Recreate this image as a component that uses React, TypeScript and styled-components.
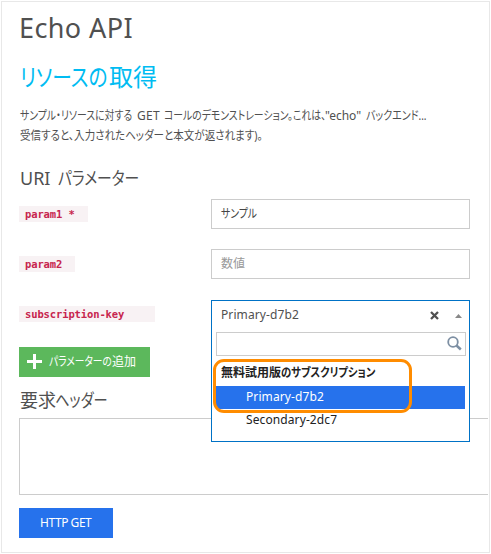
import React from "react";
import styled, { createGlobalStyle, css } from "styled-components";

const Global = createGlobalStyle`
  *, *::before, *::after { box-sizing: border-box; }
  body { margin: 0; background: #fff; overflow: hidden; }
  h1, h2, h3, p, ul { margin: 0; padding: 0; font-weight: 400; }
`;

const Frame = styled.main`
  width: 489px;
  height: 552px;
  margin: 1px;
  padding: 0 1px 0 17px;
  border: 1px solid #e8e8e8;
  background: #fff;
  color: #505050;
  font: 12px/20px "Noto Sans", "Noto Sans CJK JP", sans-serif;
`;

/* Horizontally condensed text run, as in compact Japanese UI type. */
const Run = styled.span<{ $scale?: number; $space?: number; $width?: number }>`
  display: inline-block;
  width: ${(p) => (p.$width ? `${p.$width}px` : "auto")};
  white-space: nowrap;
  transform-origin: 0 50%;
  font-feature-settings: "palt";
  letter-spacing: ${(p) => p.$space ?? 0}px;
  transform: scaleX(${(p) => p.$scale ?? 1});
`;

const Line = styled.span`
  display: flex;
  height: 20px;
`;

const Title = styled.h1`
  height: 60px;
  padding: 6px 0 0 0;
  font-size: 27px;
  line-height: 40px;
`;

const Operation = styled.h2`
  display: flex;
  height: 43px;
  padding-left: 1px;
  color: #00bcf2;
  font-size: 24px;
  line-height: 30px;
`;

const Description = styled.p`
  height: 60px;
  padding: 1px 0 0 1px;
`;

const Section = styled.h3<{ $height: number; $top?: number }>`
  display: flex;
  height: ${(p) => p.$height}px;
  padding: ${(p) => p.$top ?? 0}px 0 0 1px;
  font-size: 18px;
  line-height: 26px;
`;

const ParamRow = styled.div<{ $height: number }>`
  display: grid;
  grid-template-columns: 192px 259px;
  align-items: start;
  height: ${(p) => p.$height}px;
`;

const Key = styled.code<{ $width: number }>`
  width: ${(p) => p.$width}px;
  height: 16px;
  margin-top: 7px;
  padding-left: 6px;
  background: #f8f2f4;
  color: #c7254e;
  font: bold 10.5px/16px "DejaVu Sans Mono", monospace;
  letter-spacing: -0.12px;
  white-space: pre;
`;

const Field = styled.div<{ $muted?: boolean }>`
  height: 30px;
  padding-left: 9px;
  border: 1px solid #ccc;
  line-height: 28px;
  color: ${(p) => (p.$muted ? "#999" : "#444")};
`;

const Select = styled.div`
  position: relative;
  z-index: 1;
  height: 142px;
  margin-top: 1px;
  padding: 0 4px;
  border: 1px solid #0072c6;
  background: #fff;
  letter-spacing: 0.1px;
`;

const Current = styled.div`
  display: flex;
  align-items: center;
  height: 31px;
  padding: 0 3px 4px 5px;

  span { flex: 1; }
`;

const ClearIcon = styled.svg`
  width: 9px;
  height: 9px;
  margin: 2px 16px 0 0;
`;

const ArrowIcon = styled.svg`
  width: 7px;
  height: 4px;
  margin-top: 3px;
`;

const Search = styled.div`
  display: flex;
  justify-content: flex-end;
  width: 250px;
  height: 24px;
  padding: 3px 3px;
  border: 1px solid #ccc;
`;

const SearchIcon = styled.svg`
  width: 15px;
  height: 15px;
`;

const Group = styled.div`
  display: flex;
  height: 30px;
  padding: 7px 0 0 5px;
  color: #222;
  font-weight: 700;
  letter-spacing: 0;
`;

const Option = styled.div<{ $active?: boolean }>`
  width: 249px;
  height: 23px;
  padding-left: 30px;
  line-height: 22px;
  color: #222;
  ${(p) =>
    p.$active &&
    css`
      background: #2672ec;
      color: #fff;
    `}
`;

const Highlight = styled.div`
  position: absolute;
  left: 1px;
  top: 58px;
  width: 199px;
  height: 54px;
  border: 3px solid #ff8c00;
  border-radius: 11px;
`;

const Button = styled.button<{ $green?: boolean }>`
  display: flex;
  align-items: center;
  width: ${(p) => (p.$green ? 131 : 94)}px;
  height: 30px;
  padding: 0 0 1px ${(p) => (p.$green ? 8 : 21)}px;
  border: 0;
  background: ${(p) => (p.$green ? "#5cb85c" : "#2672ec")};
  color: #fff;
  font: inherit;
`;

const PlusIcon = styled.svg`
  flex: none;
  width: 15px;
  height: 15px;
  margin: 0 7px 0 0;
`;

const HeadersBox = styled.div`
  width: 469px;
  height: 77px;
  margin-bottom: 13px;
  border: 1px solid #ccc;
  border-right: 0;
`;

export default function App() {
  return (
    <>
      <Global />
      <Frame>
        <Title><Run $space={0.4}>Echo API</Run></Title>
        <Operation>
          <Run $scale={0.82} $width={89}>リソースの</Run>
          <Run>取得</Run>
        </Operation>
        <Description>
          <Line>
            <Run $scale={0.82} $width={117}>サンプル・リソースに対する</Run>
            <Run $width={27} $space={0.3}>GET</Run>
            <Run $scale={0.82} $width={161}>コールのデモンストレーション。これは、</Run>
            <Run $width={41}>"echo"</Run>
            <Run $scale={0.83}>バックエンド...</Run>
          </Line>
          <Line>
            <Run $scale={0.877}>受信すると、入力されたヘッダーと本文が返されます)。</Run>
          </Line>
        </Description>
        <Section $height={34}>
          <Run $width={38}>URI</Run>
          <Run $scale={0.82}>パラメーター</Run>
        </Section>
        <ParamRow $height={50}>
          <Key $width={69}>param1 *</Key>
          <Field><Run $scale={0.82}>サンプル</Run></Field>
        </ParamRow>
        <ParamRow $height={50}>
          <Key $width={56}>param2</Key>
          <Field $muted><Run>数値</Run></Field>
        </ParamRow>
        <ParamRow $height={48}>
          <Key $width={136}>subscription-key</Key>
          <Select>
            <Current>
              <span>Primary-d7b2</span>
              <ClearIcon viewBox="0 0 9 9">
                <path d="M1 1 8 8M8 1 1 8" stroke="#505050" strokeWidth="2.3" />
              </ClearIcon>
              <ArrowIcon viewBox="0 0 7 4">
                <path d="M0 4 3.5 0 7 4Z" fill="#888" />
              </ArrowIcon>
            </Current>
            <Search>
              <SearchIcon viewBox="0 0 15 15" fill="none" stroke="#7d8fa3">
                <circle cx="6" cy="6" r="4.8" strokeWidth="1.8" />
                <path d="m9.5 9.5 4.3 4" strokeWidth="2.5" />
              </SearchIcon>
            </Search>
            <Group>
              <Run $width={60}>無料試用版</Run>
              <Run $scale={0.86}>のサブスクリプション</Run>
            </Group>
            <Option $active>Primary-d7b2</Option>
            <Option>Secondary-2dc7</Option>
            <Highlight />
          </Select>
        </ParamRow>
        <Button $green>
          <PlusIcon viewBox="0 0 15 15">
            <path d="M7.5 0v15M0 7.5h15" stroke="#fff" strokeWidth="3" />
          </PlusIcon>
          <Run $scale={0.81} $width={63}>パラメーターの</Run>
          <Run>追加</Run>
        </Button>
        <Section $height={41} $top={10}>
          <Run $width={35}>要求</Run>
          <Run $scale={0.79}>ヘッダー</Run>
        </Section>
        <HeadersBox />
        <Button><Run $space={-0.45}>HTTP GET</Run></Button>
      </Frame>
    </>
  );
}
